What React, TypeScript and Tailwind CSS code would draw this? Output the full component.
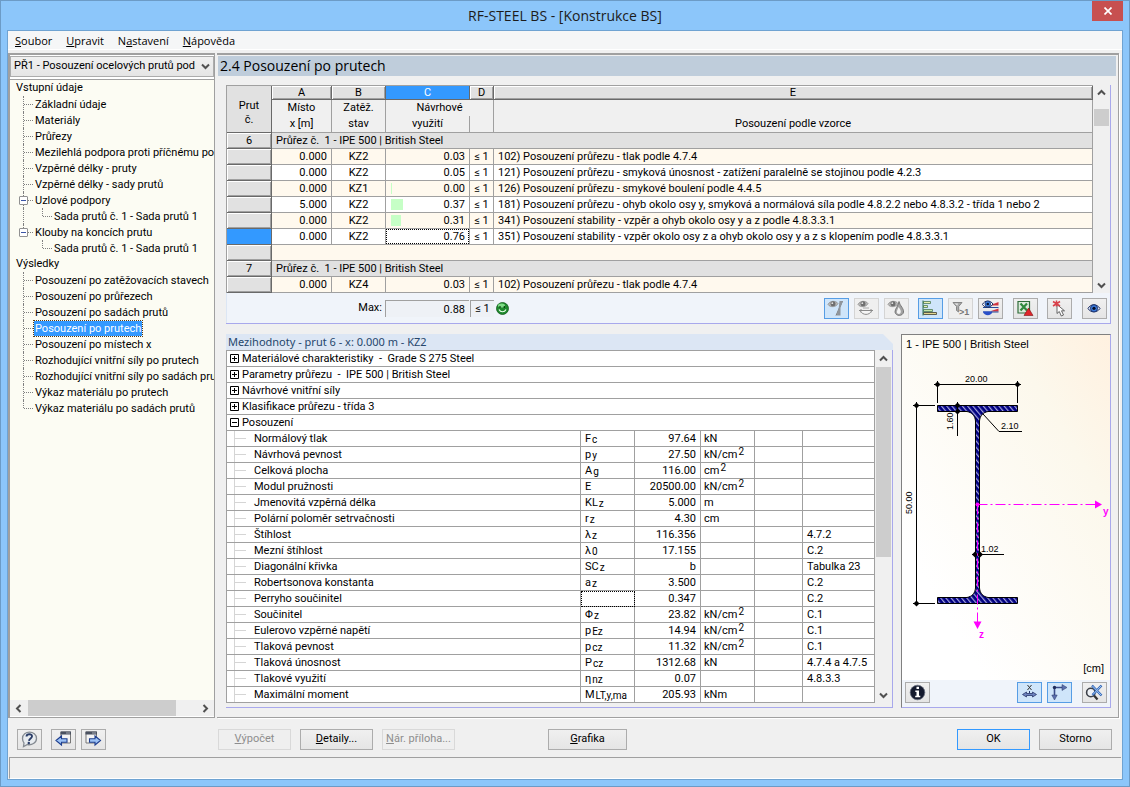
import React from 'react';

type TreeNode = {
  label: string;
  level: 0 | 1 | 2;
  last?: boolean;
  open?: boolean;
  trunk?: boolean;
  active?: boolean;
};

const TREE: TreeNode[] = [
  { label: 'Vstupní údaje', level: 0 },
  { label: 'Základní údaje', level: 1 },
  { label: 'Materiály', level: 1 },
  { label: 'Průřezy', level: 1 },
  { label: 'Mezilehlá podpora proti příčnému pos', level: 1 },
  { label: 'Vzpěrné délky - pruty', level: 1 },
  { label: 'Vzpěrné délky - sady prutů', level: 1 },
  { label: 'Uzlové podpory', level: 1, open: true },
  { label: 'Sada prutů č. 1 - Sada prutů 1', level: 2, trunk: true },
  { label: 'Klouby na koncích prutu', level: 1, open: true, last: true },
  { label: 'Sada prutů č. 1 - Sada prutů 1', level: 2 },
  { label: 'Výsledky', level: 0 },
  { label: 'Posouzení po zatěžovacích stavech', level: 1 },
  { label: 'Posouzení po průřezech', level: 1 },
  { label: 'Posouzení po sadách prutů', level: 1 },
  { label: 'Posouzení po prutech', level: 1, active: true },
  { label: 'Posouzení po místech x', level: 1 },
  { label: 'Rozhodující vnitřní síly po prutech', level: 1 },
  { label: 'Rozhodující vnitřní síly po sadách pru', level: 1 },
  { label: 'Výkaz materiálu po prutech', level: 1 },
  { label: 'Výkaz materiálu po sadách prutů', level: 1, last: true },
];

type CheckRow =
  | { kind: 'group'; no: string; title: string }
  | { kind: 'empty' }
  | { kind: 'data'; x: string; lc: string; ratio: string; bar?: number; text: string; current?: boolean };

const CHECKS: CheckRow[] = [
  { kind: 'group', no: '6', title: 'Průřez č.  1 - IPE 500 | British Steel' },
  { kind: 'data', x: '0.000', lc: 'KZ2', ratio: '0.03', text: '102) Posouzení průřezu - tlak podle 4.7.4' },
  { kind: 'data', x: '0.000', lc: 'KZ2', ratio: '0.05', text: '121) Posouzení průřezu - smyková únosnost - zatížení paralelně se stojinou podle 4.2.3' },
  { kind: 'data', x: '0.000', lc: 'KZ1', ratio: '0.00', bar: 1, text: '126) Posouzení průřezu - smykové boulení podle 4.4.5' },
  { kind: 'data', x: '5.000', lc: 'KZ2', ratio: '0.37', bar: 12, text: '181) Posouzení průřezu - ohyb okolo osy y, smyková a normálová síla podle 4.8.2.2 nebo 4.8.3.2 - třída 1 nebo 2' },
  { kind: 'data', x: '0.000', lc: 'KZ2', ratio: '0.31', bar: 10, text: '341) Posouzení stability - vzpěr a ohyb okolo osy y a z podle 4.8.3.3.1' },
  { kind: 'data', x: '0.000', lc: 'KZ2', ratio: '0.76', text: '351) Posouzení stability - vzpěr okolo osy z a ohyb okolo osy y a z s klopením podle 4.8.3.3.1', current: true },
  { kind: 'empty' },
  { kind: 'group', no: '7', title: 'Průřez č.  1 - IPE 500 | British Steel' },
  { kind: 'data', x: '0.000', lc: 'KZ4', ratio: '0.03', text: '102) Posouzení průřezu - tlak podle 4.7.4' },
];

const SECTIONS = [
  'Materiálové charakteristiky  -  Grade S 275 Steel',
  'Parametry průřezu  -  IPE 500 | British Steel',
  'Návrhové vnitřní síly',
  'Klasifikace průřezu - třída 3',
];

const DETAILS = [
  { name: 'Normálový tlak', sym: 'F', sub: 'c', value: '97.64', unit: 'kN' },
  { name: 'Návrhová pevnost', sym: 'p', sub: 'y', value: '27.50', unit: 'kN/cm', sq: true },
  { name: 'Celková plocha', sym: 'A', sub: 'g', value: '116.00', unit: 'cm', sq: true },
  { name: 'Modul pružnosti', sym: 'E', value: '20500.00', unit: 'kN/cm', sq: true },
  { name: 'Jmenovitá vzpěrná délka', sym: 'KL', sub: 'z', value: '5.000', unit: 'm' },
  { name: 'Polární poloměr setrvačnosti', sym: 'r', sub: 'z', value: '4.30', unit: 'cm' },
  { name: 'Štíhlost', sym: 'λ', sub: 'z', value: '116.356', ref: '4.7.2' },
  { name: 'Mezní štíhlost', sym: 'λ', sub: '0', value: '17.155', ref: 'C.2' },
  { name: 'Diagonální křivka', sym: 'SC', sub: 'z', value: 'b', ref: 'Tabulka 23' },
  { name: 'Robertsonova konstanta', sym: 'a', sub: 'z', value: '3.500', ref: 'C.2' },
  { name: 'Perryho součinitel', value: '0.347', ref: 'C.2', focus: true },
  { name: 'Součinitel', sym: 'Φ', sub: 'z', value: '23.82', unit: 'kN/cm', sq: true, ref: 'C.1' },
  { name: 'Eulerovo vzpěrné napětí', sym: 'p', sub: 'Ez', value: '14.94', unit: 'kN/cm', sq: true, ref: 'C.1' },
  { name: 'Tlaková pevnost', sym: 'p', sub: 'cz', value: '11.32', unit: 'kN/cm', sq: true, ref: 'C.1' },
  { name: 'Tlaková únosnost', sym: 'P', sub: 'cz', value: '1312.68', unit: 'kN', ref: '4.7.4 a 4.7.5' },
  { name: 'Tlakové využití', sym: 'η', sub: 'nz', value: '0.07', ref: '4.8.3.3' },
  { name: 'Maximální moment', sym: 'M', sub: 'LT,y,ma', value: '205.93', unit: 'kNm' },
];

const BEVEL = 'bg-[#e1e1e1] shadow-[inset_1px_1px_0_#fff,inset_-1px_-1px_0_#a0a0a0]';
const CELL = 'h-4 border-r border-b border-[#a0a0a0] p-0 leading-[15px] whitespace-nowrap overflow-hidden';

/* ---------- icons ---------- */

const Icon: React.FC<{ children: React.ReactNode }> = ({ children }) => (
  <svg width="23" height="19" viewBox="0 0 23 19" aria-hidden="true">
    {children}
  </svg>
);

const GrayEye = () => (
  <g>
    <path d="M3 5.5C4.500 2 10.500 1 13 4.500C11.500 8 5.500 9 3 5.500Z" fill="#b9b9b9" stroke="#8b8b8b" strokeWidth=".8" />
    <circle cx="8" cy="4.800" r="2.500" fill="#6f6f6f" />
    <circle cx="7.300" cy="4.200" r=".9" fill="#e2e2e2" />
  </g>
);

const EyeStressIcon = () => (
  <Icon>
    <path d="M11 16.500 17.500 2" stroke="#777" fill="none" />
    <path d="M14.500 2H18L15.500 8.500V16.500H11.500L13.700 9Z" fill="#8f959c" />
    <GrayEye />
  </Icon>
);

const EyeSectionIcon = () => (
  <Icon>
    <GrayEye />
    <path d="M4 11.500H18M6 10v3.500M16 10v3.500" stroke="#8a8a8a" fill="none" />
    <path d="M5.500 12C7.500 16.500 14.500 16.500 16.500 12" fill="#f6f6f6" stroke="#8a8a8a" />
    <path d="M8 9h6" stroke="#aaa" />
  </Icon>
);

const EyeDropIcon = () => (
  <Icon>
    <GrayEye />
    <path d="M14 2.500C15 7 19 9.500 18.500 13C18 17.500 10.500 17.500 10 13C9.800 10 13.500 7 14 2.500Z" fill="#a3a3a3" stroke="#777" />
    <path d="M13.500 8C15 10 16.500 12 15.500 14C14 16 11.500 14.500 11.800 12.500Z" fill="#f4f4f4" />
  </Icon>
);

const BarsIcon = () => (
  <Icon>
    <path d="M4.500 2.500h7v2h-7zM4.500 6.500h4v2h-4z" fill="#e9efb0" stroke="#4c7a55" strokeWidth=".8" />
    <path d="M4.500 10.500h9v2h-9z" fill="#c4e4a8" stroke="#4c7a55" strokeWidth=".8" />
    <path d="M4.500 13.500h13v2h-13z" fill="#e2d58d" stroke="#3d3d30" strokeWidth=".8" />
    <path d="M4 1.500V16.500" stroke="#2f6f52" />
  </Icon>
);

const FilterIcon = () => (
  <Icon>
    <path d="M4 3.500H13L9.700 7.500V13L7.500 11.500V7.500Z" fill="#a9a9a9" stroke="#868686" />
    <path d="M5.500 4.500H9L8.300 6.500Z" fill="#ececec" />
    <text x="10" y="16" fontSize="9" fontWeight="bold" fill="#777" fontFamily="Liberation Sans, sans-serif">&gt;1</text>
  </Icon>
);

const EyeColorsIcon = () => (
  <Icon>
    <path d="M13 5.500 19.500 3V6.500H13ZM12 12 19.500 9.500V12.500H12Z" fill="#cf3440" />
    <path d="M4 8.500H19.500M4 13H19.500" stroke="#234a9a" />
    <path d="M4 12.500H13.500C12.500 17.500 5 17.500 4 12.500Z" fill="#2a4fc8" />
    <path d="M3.500 5.500C5.500 1 11.500 1 14 5C11.500 9 6 9.500 3.500 5.500Z" fill="#fff" stroke="#12245a" />
    <circle cx="8.800" cy="5" r="2.900" fill="#3d7fe0" stroke="#12245a" strokeWidth=".6" />
    <circle cx="8.800" cy="5" r="1.300" fill="#06112f" />
  </Icon>
);

const ExcelIcon = () => (
  <Icon>
    <path d="M4 2.500H15.500V14H4Z" fill="#dcebdd" stroke="#2f6d3a" strokeWidth="1.200" />
    <path d="M6.500 4.500 13 11.500M13 4.500 6.500 11.500" stroke="#2f8a3e" strokeWidth="2.200" />
    <path d="M14.500 9 19 16.500H10Z" fill="#e0262b" stroke="#7a1013" strokeWidth=".6" />
  </Icon>
);

const PickIcon = () => (
  <Icon>
    <path d="M9 5.500V14.500L11.300 12.500 13.300 17 15.500 16 13.500 11.800H16.500Z" fill="#fff" stroke="#555" strokeWidth=".9" />
    <path d="M5 2.500 12 7M5 7 12 2.500M8.500 1.500V7.500" stroke="#d9404a" strokeWidth="1.500" />
  </Icon>
);

const EyeIcon = () => (
  <Icon>
    <path d="M5 9.500C7.500 4.500 14 4.500 17 9.500C14 14 7.500 14 5 9.500Z" fill="#dfe8f7" stroke="#1d2f66" />
    <circle cx="11" cy="9.300" r="3.600" fill="#3a78d8" stroke="#14265a" strokeWidth=".8" />
    <circle cx="11" cy="9.300" r="1.600" fill="#050d26" />
  </Icon>
);

const InfoIcon = () => (
  <Icon>
    <circle cx="11.500" cy="9.500" r="7.300" fill="#141a2e" stroke="#6a7080" strokeWidth=".8" />
    <path d="M10.500 3.700h2.500v2.300h-2.500zM9.300 7.500H13V12.700H14.300V14.300H9.200V12.700H10.500V9H9.300Z" fill="#fff" />
  </Icon>
);

const DimensionIcon = () => (
  <Icon>
    <path d="M9.500 2 13.500 7M13.500 2 9.500 7" stroke="#333" />
    <path d="M11.500 8V10" stroke="#28366b" />
    <path d="M4.500 11.500 8.500 9V10.500H14.500V9L18.500 11.500 14.500 14V12.500H8.500V14Z" fill="#6d83bf" stroke="#28366b" strokeWidth=".8" />
  </Icon>
);

const AxesIcon = () => (
  <Icon>
    <path d="M6.500 14V4.500H15" stroke="#3a4c8a" strokeWidth="1.600" fill="none" />
    <path d="M14 1.500 19 4.500 14 7.500ZM3.800 12 6.500 17 9.200 12Z" fill="#5b70ae" stroke="#2b3869" strokeWidth=".5" />
    <circle cx="6.500" cy="4.500" r="1.700" fill="#1f2c5c" />
  </Icon>
);

const ResetZoomIcon = () => (
  <Icon>
    <circle cx="7.800" cy="9.500" r="4.200" fill="#edf1f6" stroke="#3c4048" strokeWidth="1.600" />
    <path d="M11 12.500 14.500 16.500" stroke="#333" strokeWidth="2.300" />
    <path d="M9 2.500 18.500 12.500M18.500 2.500 9.500 12" stroke="#2f65b8" strokeWidth="2.400" />
    <path d="M9.500 3 18 12M18 3 10 11.500" stroke="#a5c8f2" />
  </Icon>
);

const HelpIcon = () => (
  <Icon>
    <path d="M4.500 8.500C4.500 0 18.500 0 18.500 8.500C18.500 13 13.500 15.500 9.500 14.500L5.500 16.500 6 13C5 11.500 4.500 10.500 4.500 8.500Z" fill="#e8ecf0" stroke="#858b92" strokeWidth="1.300" />
    <path d="M8.500 6.500C8.700 3.500 14.200 3.500 14 6.500C13.800 8.500 11.200 8.500 11 10.800" stroke="#2b3e69" strokeWidth="1.900" fill="none" />
    <circle cx="10.800" cy="13" r="1.200" fill="#2b3e69" />
  </Icon>
);

const PrevIcon = () => (
  <Icon>
    <path d="M9 2H18.500V13H9Z" fill="#f4f4f4" stroke="#777" />
    <path d="M8.500 1.500h10.500v3h-10.500z" fill="#4a5160" />
    <path d="M14.500 3h1M16.500 3h1" stroke="#fff" />
    <path d="M4 10.500 9.500 6V8.700H15V12.300H9.500V15Z" fill="#9cc2f5" stroke="#1f3f8f" strokeWidth="1.100" />
  </Icon>
);

const NextIcon = () => (
  <Icon>
    <path d="M4 2H14.500V13H4Z" fill="#f4f4f4" stroke="#777" />
    <path d="M3.500 1.500h11.500v3h-11.500z" fill="#4a5160" />
    <path d="M10.500 3h1M12.500 3h1" stroke="#fff" />
    <path d="M18.500 10.500 13 6V8.700H7.500V12.300H13V15Z" fill="#9cc2f5" stroke="#1f3f8f" strokeWidth="1.100" />
  </Icon>
);

const SmileyIcon = () => (
  <svg width="13" height="13" viewBox="0 0 13 13" aria-label="Vyhovuje" role="img">
    <circle cx="6.500" cy="6.500" r="6" fill="#1f8a2e" stroke="#125c1b" strokeWidth=".8" />
    <ellipse cx="5.500" cy="3.500" rx="3.500" ry="2" fill="#7fdc86" />
    <path d="M4 4v2M8.300 4v2" stroke="#0b3a10" strokeWidth="1.200" />
    <path d="M3 7.500C4.500 10.500 8.500 10.500 10 7.500" stroke="#eaffea" strokeWidth="1.200" fill="none" />
  </svg>
);

/* ---------- small controls ---------- */

const ToolButton: React.FC<{
  label: string;
  variant?: 'normal' | 'checked' | 'disabled';
  className?: string;
  children: React.ReactNode;
}> = ({ label, variant = 'normal', className = '', children }) => {
  const look =
    variant === 'checked'
      ? 'border-[#569de5] bg-[#cfe5fa]'
      : variant === 'disabled'
        ? 'border-[#d4d4d4] bg-[#efefef]'
        : 'border-[#acacac] bg-linear-to-b from-[#f0f0f0] to-[#e5e5e5]';
  return (
    <button
      type="button"
      aria-label={label}
      disabled={variant === 'disabled'}
      className={`h-[21px] w-[25px] shrink-0 border ${look} ${className}`}
    >
      {children}
    </button>
  );
};

const Arrow: React.FC<{ dir: 'up' | 'down' | 'left' | 'right' }> = ({ dir }) => {
  const d = {
    up: 'M4 9.500 7.500 6 11 9.500',
    down: 'M4 5.500 7.500 9 11 5.500',
    left: 'M9.500 4 6 7.500 9.500 11',
    right: 'M5.500 4 9 7.500 5.500 11',
  }[dir];
  return (
    <svg width="15" height="15" viewBox="0 0 15 15" aria-hidden="true">
      <path d={d} fill="none" stroke="#505050" strokeWidth="2" />
    </svg>
  );
};

const PushButton: React.FC<{ className?: string; disabled?: boolean; isDefault?: boolean; children: React.ReactNode }> = ({
  className = 'w-[73px]',
  disabled,
  isDefault,
  children,
}) => (
  <button
    type="button"
    disabled={disabled}
    className={`h-[21px] shrink-0 border whitespace-nowrap ${
      disabled
        ? 'border-[#d9d9d9] bg-[#efefef] text-[#8d8d8d]'
        : isDefault
          ? 'border-[#3399ff] bg-linear-to-b from-[#f0f0f0] to-[#e5e5e5]'
          : 'border-[#acacac] bg-linear-to-b from-[#f0f0f0] to-[#e5e5e5]'
    } ${className}`}
  >
    {children}
  </button>
);

/* ---------- navigator ---------- */

const TreeItem: React.FC<{ node: TreeNode }> = ({ node }) => {
  if (node.level === 0) {
    return (
      <li className="flex h-4 items-center pl-[6px]">
        <button type="button" className="whitespace-nowrap">{node.label}</button>
      </li>
    );
  }
  return (
    <li className="flex h-4 items-center pl-[13px]">
      {node.level === 2 && (
        <span className={`h-4 w-[19px] shrink-0 ${node.trunk ? 'border-l border-dotted border-[#808080]' : ''}`} />
      )}
      <span
        className={`w-0 shrink-0 self-start border-l border-dotted border-[#808080] ${
          node.last || node.level === 2 ? 'h-2' : 'h-4'
        }`}
      />
      <span className="relative w-[9px] shrink-0 border-t border-dotted border-[#808080]">
        {node.open && (
          <span className="absolute -top-[5px] -left-[5px] flex size-[9px] items-center justify-center rounded-[1px] border border-[#919191] bg-white">
            <span className="h-px w-[5px] bg-[#3b55a5]" />
          </span>
        )}
      </span>
      <button
        type="button"
        className={`ml-px h-[15px] px-px leading-[15px] whitespace-nowrap ${
          node.active ? 'bg-[#3399ff] text-white outline outline-dotted outline-[#5a3a10]' : ''
        }`}
      >
        {node.label}
      </button>
    </li>
  );
};

const Navigator: React.FC = () => (
  <aside className="flex w-[207px] shrink-0 flex-col border-t-2 border-r border-b border-l-2 border-[#a0a0a0] bg-white pt-px pb-px">
    <div className="relative h-[21px] border border-[#acacac] bg-linear-to-b from-[#f0f0f0] to-[#e5e5e5]">
      <select aria-label="Případ" className="h-full w-full appearance-none pr-3 pl-[3px] text-[11px]">
        <option>PŘ1 - Posouzení ocelových prutů pod</option>
      </select>
      <span className="pointer-events-none absolute top-[2px] right-0">
        <Arrow dir="down" />
      </span>
    </div>
    <div className="mt-[2px] flex min-h-0 flex-1 flex-col border-t border-[#a0a0a0] bg-[#fcfcf3]">
      <ul className="min-h-0 flex-1 overflow-hidden">
        {TREE.map((node, index) => (
          <TreeItem key={index} node={node} />
        ))}
      </ul>
      <div className="flex h-[16px] shrink-0 items-center bg-[#f0f0f0] px-px">
        <Arrow dir="left" />
        <div className="flex h-full flex-1 px-[2px]">
          <div className="h-full w-[88%] bg-[#cdcdcd]" />
        </div>
        <Arrow dir="right" />
      </div>
    </div>
  </aside>
);

/* ---------- upper table ---------- */

const ChecksTable: React.FC = () => (
  <table className="w-full min-w-0 flex-1 table-fixed border-separate border-spacing-0 border-t border-l border-[#a0a0a0]">
    <colgroup>
      <col className="w-[45px]" />
      <col className="w-[60px]" />
      <col className="w-[54px]" />
      <col className="w-[84px]" />
      <col className="w-[24px]" />
      <col />
    </colgroup>
    <thead>
      <tr>
        <th rowSpan={2} className="border-r border-b border-[#696969] bg-[#e1e1e1] p-0 pt-2 leading-[14px] font-normal">
          Prut<br />č.
        </th>
        {['A', 'B', 'C', 'D', 'E'].map((letter) => (
          <th
            key={letter}
            className={`h-[14px] border-r border-b border-[#696969] p-0 leading-[13px] font-normal ${
              letter === 'C' ? 'bg-[#3399ff] text-white' : BEVEL
            }`}
          >
            {letter}
          </th>
        ))}
      </tr>
      <tr className="bg-[#f0f0f0] leading-4">
        <th className="h-[33px] border-r border-b border-[#a0a0a0] p-0 align-top font-normal">Místo<br />x [m]</th>
        <th className="border-r border-b border-[#a0a0a0] p-0 align-top font-normal">Zatěž.<br />stav</th>
        <th colSpan={2} className="border-r border-b border-[#a0a0a0] p-0 align-top font-normal">
          Návrhové
          <span className="flex h-4">
            <span className="w-[83px] shrink-0">využití</span>
            <span className="border-l border-[#a0a0a0]" />
          </span>
        </th>
        <th className="border-r border-b border-[#a0a0a0] p-0 align-bottom font-normal">Posouzení podle vzorce</th>
      </tr>
    </thead>
    <tbody>
      {CHECKS.map((row, index) => {
        const current = row.kind === 'data' && row.current;
        const tint = index % 2 === 1 ? 'bg-[#fff9ee]' : 'bg-white';
        return (
          <tr key={index} className={row.kind === 'group' ? 'bg-[#e1e1e1]' : tint}>
            <th
              className={`h-4 border-r border-b border-[#696969] p-0 leading-[15px] font-normal ${
                current ? 'bg-[#3399ff]' : BEVEL
              }`}
            >
              {row.kind === 'group' ? row.no : ''}
            </th>
            {row.kind === 'group' && (
              <td colSpan={5} className={`${CELL} pl-1 !whitespace-pre`}>{row.title}</td>
            )}
            {row.kind === 'empty' && <td colSpan={5} className={CELL} />}
            {row.kind === 'data' && (
              <>
                <td className={`${CELL} pr-1 text-right`}>{row.x}</td>
                <td className={`${CELL} text-center`}>{row.lc}</td>
                <td className={`${CELL} text-right`}>
                  <span
                    className={`flex h-[15px] items-center justify-between pr-1 pl-[5px] ${
                      current ? 'outline -outline-offset-1 outline-dotted outline-black' : ''
                    }`}
                  >
                    <span className="h-[11px] bg-[#c6ffc6]" style={{ width: row.bar ?? 0 }} />
                    {row.ratio}
                  </span>
                </td>
                <td className={`${CELL} text-center`}>≤ 1</td>
                <td className={`${CELL} pl-1`}>{row.text}</td>
              </>
            )}
          </tr>
        );
      })}
    </tbody>
  </table>
);

const ChecksPanel: React.FC = () => (
  <section className="border-r border-b border-[#a8a8ec]">
    <div className="flex">
      <ChecksTable />
      <div className="flex w-[17px] shrink-0 flex-col bg-[#f0f0f0] px-px">
        <Arrow dir="up" />
        <div className="mt-[9px] h-[17px] bg-[#cdcdcd]" />
        <div className="flex-1" />
        <Arrow dir="down" />
      </div>
    </div>
    <div className="flex h-[30px] items-center border-l border-[#dce6f4] bg-[#f0f4fa] pt-px pr-[3px]">
      <label htmlFor="max" className="w-[155px] shrink-0 text-right">Max:</label>
      <input
        id="max"
        readOnly
        value="0.88"
        className="ml-[3px] h-[17px] w-[84px] border-t border-l border-[#a0a0a0] bg-[#eef1f6] pr-1 text-right"
      />
      <output className="ml-px h-[17px] w-[24px] border-t border-l border-[#a0a0a0] bg-[#eef1f6] text-center leading-4">≤ 1</output>
      <span className="ml-[2px]"><SmileyIcon /></span>
      <div className="ml-auto flex">
        <ToolButton label="Zobrazit napětí" variant="checked"><EyeStressIcon /></ToolButton>
        <ToolButton label="Zobrazit průřez" variant="disabled" className="ml-[5px]"><EyeSectionIcon /></ToolButton>
        <ToolButton label="Zobrazit požár" variant="disabled" className="ml-[5px]"><EyeDropIcon /></ToolButton>
        <ToolButton label="Barevné pruhy" variant="checked" className="ml-[9px]"><BarsIcon /></ToolButton>
        <ToolButton label="Filtr větší než 1" variant="disabled" className="ml-[5px]"><FilterIcon /></ToolButton>
        <ToolButton label="Barevné spektrum" className="ml-[5px]"><EyeColorsIcon /></ToolButton>
        <ToolButton label="Export do Excelu" className="ml-[10px]"><ExcelIcon /></ToolButton>
        <ToolButton label="Vybrat prut" className="ml-[9px]"><PickIcon /></ToolButton>
        <ToolButton label="Režim zobrazení" className="ml-[10px]"><EyeIcon /></ToolButton>
      </div>
    </div>
  </section>
);

/* ---------- lower table ---------- */

const Expander: React.FC<{ open?: boolean }> = ({ open }) => (
  <svg width="9" height="9" viewBox="0 0 9 9" className="shrink-0" aria-hidden="true">
    <path d={open ? 'M.5.5h8v8h-8zM2 4.500h5' : 'M.5.5h8v8h-8zM2 4.500h5M4.500 2v5'} fill="#fff" stroke="#000" />
  </svg>
);

const DetailsPanel: React.FC = () => (
  <section className="flex min-w-0 flex-1 flex-col">
    <h2 className="h-4 bg-[#dce6f4] pl-[2px] font-['Noto_Sans',sans-serif] text-[11px] leading-4 text-[#26466d] [clip-path:polygon(0_0,calc(100%-10px)_0,100%_10px,100%_100%,0_100%)]">
      Mezihodnoty - prut 6 - x: 0.000 m - KZ2
    </h2>
    <div className="flex flex-1 items-start border-r border-b border-[#a8a8ec] pb-1">
      <table className="w-full min-w-0 flex-1 table-fixed border-separate border-spacing-0 border-t border-l border-[#a0a0a0] bg-white">
        <colgroup>
          <col />
          <col className="w-[54px]" />
          <col className="w-[66px]" />
          <col className="w-[54px]" />
          <col className="w-[48px]" />
          <col className="w-[72px]" />
        </colgroup>
        <tbody>
          {[...SECTIONS, 'Posouzení'].map((title) => (
            <tr key={title}>
              <td colSpan={6} className={CELL}>
                <span className="flex items-center gap-[3px] pl-[3px] whitespace-pre">
                  <Expander open={title === 'Posouzení'} />
                  {title}
                </span>
              </td>
            </tr>
          ))}
          {DETAILS.map((row) => (
            <tr key={row.name}>
              <td className={CELL}>
                <span className="flex h-[15px] items-center pl-[7px]">
                  <span className="h-full border-l border-[#d5d5d5]" />
                  <span className="mr-2 w-[11px] border-t border-[#d5d5d5]" />
                  {row.name}
                </span>
              </td>
              <td className={`${CELL} pl-1 ${row.focus ? 'outline -outline-offset-1 outline-dotted outline-black' : ''}`}>
                {row.sym}
                {row.sub && <sub className="bottom-[-1px] ml-px text-[10px]">{row.sub}</sub>}
              </td>
              <td className={`${CELL} pr-1 text-right`}>{row.value}</td>
              <td className={`${CELL} pl-[3px]`}>
                {row.unit}
                {row.sq && <sup className="top-[-3px] ml-px text-[10px]">2</sup>}
              </td>
              <td className={CELL} />
              <td className={`${CELL} pl-1`}>{row.ref}</td>
            </tr>
          ))}
        </tbody>
      </table>
      <div className="flex w-[17px] shrink-0 flex-col self-stretch bg-[#f0f0f0] px-px pt-px">
        <Arrow dir="up" />
        <div className="mt-px h-[190px] bg-[#cdcdcd]" />
        <div className="flex-1" />
        <Arrow dir="down" />
      </div>
    </div>
  </section>
);

/* ---------- cross-section ---------- */

const Diamond: React.FC<{ x: number; y: number }> = ({ x, y }) => (
  <path d={`M${x - 3} ${y}L${x} ${y - 3}L${x + 3} ${y}L${x} ${y + 3}Z`} fill="#000" />
);

const SectionDrawing: React.FC = () => (
  <svg width="208" height="325" viewBox="0 20 208 325" className="block" role="img" aria-label="IPE 500">
    <defs>
      <pattern id="hatch" width="4" height="4" patternUnits="userSpaceOnUse" patternTransform="rotate(-40)">
        <rect width="4" height="4" fill="#000080" />
        <rect width="1.200" height="4" fill="#a5a5dc" />
      </pattern>
    </defs>

    <path
      d="M35.500 70.500H115.500V76.500H86C81 77.500 78 80.500 77.500 86V253C78 258.500 81 261.500 86 262.500H115.500V268.500H35.500V262.500H65C70 261.500 73 258.500 73.500 253V86C73 80.500 70 77.500 65 76.500H35.500Z"
      fill="url(#hatch)"
      stroke="#000"
    />

    <g stroke="#000" fill="none">
      <path d="M32 49.500H119M35.500 46V68M115.500 46V68" />
      <path d="M14.500 67V271M11 70.500H33M11 268.500H33" />
      <path d="M55.500 67V101" />
      <path d="M81 79 97 96.500H120" />
      <path d="M70 219.500H102" />
    </g>
    <Diamond x={35.5} y={49.5} />
    <Diamond x={115.5} y={49.5} />
    <Diamond x={14.5} y={70.5} />
    <Diamond x={14.5} y={268.5} />
    <Diamond x={55.5} y={70.5} />
    <Diamond x={55.5} y={76.5} />
    <Diamond x={73} y={219.5} />
    <Diamond x={78} y={219.5} />

    <g fontSize="9" fill="#000" fontFamily="Liberation Sans, sans-serif">
      <text x="63" y="47">20.00</text>
      <text x="99" y="94">2.10</text>
      <text x="79" y="217">1.02</text>
      <text transform="translate(10 179) rotate(-90)">50.00</text>
      <text transform="translate(51 95) rotate(-90)">1.60</text>
    </g>

    <g stroke="#f0f" fill="none">
      <path d="M75.500 169.500H194" strokeDasharray="10 3 2 3" />
      <path d="M75.500 169.500V288" strokeDasharray="10 3 2 3" />
    </g>
    <path d="M193 165.500V173.500L200 169.500ZM71.500 286.500H79.500L75.500 294Z" fill="#f0f" />
    <circle cx="75.500" cy="169.500" r="2" fill="#f0f" />
    <g fontSize="10" fontWeight="bold" fill="#f0f" fontFamily="Liberation Sans, sans-serif">
      <text x="201" y="180">y</text>
      <text x="77" y="303">z</text>
    </g>
  </svg>
);

const SectionPanel: React.FC = () => (
  <section className="flex w-[210px] shrink-0 flex-col border-t border-r border-b border-l border-t-[#808080] border-r-[#a8a8ec] border-b-[#a8a8ec] border-l-[#808080] font-['Liberation_Sans',sans-serif]">
    <div className="flex-1 bg-linear-to-tr from-white from-20% via-[#fcf8ec] via-75% to-[#fff1e0]">
      <div className="flex h-5 items-start pt-px pl-1 leading-4">1 - IPE 500 | British Steel</div>
      <div className="relative">
        <SectionDrawing />
        <span className="absolute right-[6px] bottom-[5px] leading-[14px]">[cm]</span>
      </div>
    </div>
    <div className="flex h-7 items-center bg-[#f0f4fa] px-[3px] pb-[2px]">
      <ToolButton label="Informace o průřezu"><InfoIcon /></ToolButton>
      <ToolButton label="Kóty" variant="checked" className="ml-auto"><DimensionIcon /></ToolButton>
      <ToolButton label="Osy" variant="checked" className="ml-[5px]"><AxesIcon /></ToolButton>
      <ToolButton label="Celý pohled" className="ml-[10px]"><ResetZoomIcon /></ToolButton>
    </div>
  </section>
);

/* ---------- window ---------- */

export default function App() {
  return (
    <div className="flex h-screen flex-col border border-[#6c9bc6] bg-[#8cc6fa] px-1.5 pb-1.5 font-[Roboto,'Liberation_Sans',sans-serif] text-[11px] text-black">
      <header className="grid h-[29px] shrink-0 grid-cols-[1fr_auto_1fr] items-start">
        <span />
        <h1 className="pt-px font-['Open_Sans',sans-serif] text-[14px] leading-7 text-[#1c1c1c]">RF-STEEL BS - [Konstrukce BS]</h1>
        <button type="button" aria-label="Zavřít" className="flex h-5 w-[31px] items-center justify-center justify-self-end bg-[#c75050]">
          <svg width="8" height="8" viewBox="0 0 8 8" aria-hidden="true">
            <path d="M.5.5 7.500 7.500M7.500.5.5 7.500" stroke="#fff" strokeWidth="1.700" />
          </svg>
        </button>
      </header>

      <div className="flex min-h-0 flex-1 flex-col border border-[#6fa3d2] bg-[#f0f0f0]">
        <nav className="flex h-[19px] shrink-0 items-center gap-[14px] border-b border-white bg-[#f5f6f7] pt-px pl-[7px] font-['Open_Sans',sans-serif] text-[11px] leading-[18px]">
          <button type="button"><u>S</u>oubor</button>
          <button type="button"><u>U</u>pravit</button>
          <button type="button">N<u>a</u>stavení</button>
          <button type="button"><u>N</u>ápověda</button>
        </nav>

        <div className="mt-[3px] flex min-h-0 flex-1 pr-[3px] pb-px">
          <Navigator />
          <main className="ml-[2px] flex min-w-0 flex-1 flex-col border-t-2 border-r border-b border-[#a0a0a0] pt-px pb-[9px] shadow-[1px_1px_0_#fff]">
            <h2 className="mr-[2px] ml-px h-5 bg-[#bfcddb] pl-[2px] font-['Open_Sans',sans-serif] text-[14px] leading-5">
              2.4 Posouzení po prutech
            </h2>
            <div className="mt-[9px] mr-[7px] ml-[9px] flex min-h-0 flex-1 flex-col gap-[10px]">
              <ChecksPanel />
              <div className="flex min-h-0 flex-1 gap-2">
                <DetailsPanel />
                <SectionPanel />
              </div>
            </div>
          </main>
        </div>

        <footer className="flex h-[38px] shrink-0 items-start pt-[10px] pr-[10px] pl-[9px]">
          <div className="flex w-[201px] shrink-0">
            <ToolButton label="Nápověda"><HelpIcon /></ToolButton>
            <ToolButton label="Předchozí tabulka" className="ml-[9px]"><PrevIcon /></ToolButton>
            <ToolButton label="Následující tabulka" className="ml-[5px]"><NextIcon /></ToolButton>
          </div>
          <div className="flex gap-[9px]">
            <PushButton disabled><u>V</u>ýpočet</PushButton>
            <PushButton><u>D</u>etaily...</PushButton>
            <PushButton disabled><u>N</u>ár. příloha...</PushButton>
          </div>
          <PushButton className="ml-[93px] w-[79px]"><u>G</u>rafika</PushButton>
          <div className="ml-auto flex gap-[9px]">
            <PushButton isDefault>OK</PushButton>
            <PushButton>Storno</PushButton>
          </div>
        </footer>
        <div className="mx-px h-[22px] shrink-0 border-t border-l border-[#a0a0a0] border-b border-b-white" />
      </div>
    </div>
  );
}
